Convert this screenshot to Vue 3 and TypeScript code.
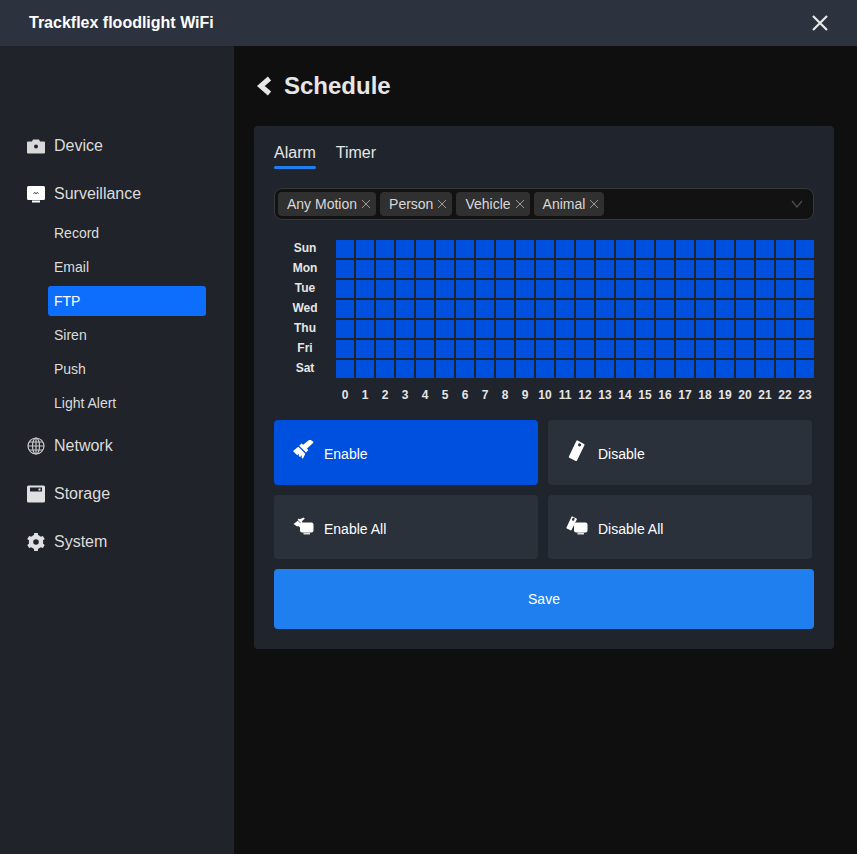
<template>
  <div class="dialog">
    <header class="top-bar">
      <span class="dialog-title">Trackflex floodlight WiFi</span>
      <svg class="close-icon" viewBox="0 0 18 18" width="18" height="18">
        <path d="M2 2L16 16M16 2L2 16" stroke="#e8e8e8" stroke-width="2.2" fill="none" />
      </svg>
    </header>
    <div class="body">
      <aside class="side-nav">
        <template v-for="item in navItems" :key="item.name">
          <div class="nav-item">
            <svg class="nav-icon" viewBox="0 0 18 18" width="18" height="18" v-html="item.icon"></svg>
            <span>{{ item.name }}</span>
          </div>
          <div v-if="item.children" class="sub-nav">
            <div
              v-for="sub in item.children"
              :key="sub"
              :class="['sub-item', sub === 'FTP' ? 'active' : '']"
            >
              {{ sub }}
            </div>
          </div>
        </template>
      </aside>
      <main class="content">
        <div class="page-head">
          <svg viewBox="0 0 18 20" width="18" height="20">
            <path d="M14.500 2.500L5.800 10l8.700 7.500" stroke="#e6e6e6" stroke-width="5" fill="none" />
          </svg>
          <h1>Schedule</h1>
        </div>
        <section class="card">
          <div class="tabs">
            <div class="tab active">Alarm</div>
            <div class="tab">Timer</div>
          </div>
          <div class="select-box">
            <div v-for="tag in tags" :key="tag" class="tag">
              <span>{{ tag }}</span>
              <svg viewBox="0 0 10 10" width="10" height="10">
                <path d="M1 1L9 9M9 1L1 9" stroke="#9a9a9a" stroke-width="1" fill="none" />
              </svg>
            </div>
            <svg class="arrow" viewBox="0 0 12 8" width="12" height="8">
              <path d="M1 1L6 7L11 1" stroke="#4c4f55" stroke-width="1.2" fill="none" />
            </svg>
          </div>
          <div class="schedule">
            <div v-for="day in days" :key="day" class="row">
              <div class="day-label">{{ day }}</div>
              <div v-for="h in hours" :key="h" class="cell"></div>
            </div>
            <div class="row hour-row">
              <div class="day-label"></div>
              <div v-for="h in hours" :key="h" class="hour">{{ h }}</div>
            </div>
          </div>
          <div class="actions">
            <button class="action primary">
              <svg viewBox="0 0 22 22" width="22" height="22">
                <path d="M21 1.500c.6.6.4 1.300-.2 1.800L15 8.600l1.300 1.600-2.300 2.300-6.800-6.800 2.300-2.200 1.600 1.300 5.700-4.600c.6-.5 1.400-.8 2-.2z" fill="#fff" />
                <path d="M6.300 6.800l7 7-2.400 5-1.400-1.200.6-2.600-2 2-1.400-1-.1-.1.7-2.200-1.900 1.500-1.500-1.200L1 11z" fill="#fff" />
              </svg>
              <span>Enable</span>
            </button>
            <button class="action">
              <svg viewBox="0 0 22 22" width="22" height="22">
                <path fill-rule="evenodd" d="M11.600.6l6.400 3.300c.5.300.7.800.4 1.300L11 20.600c-.3.500-.8.600-1.300.4L3.300 17.700c-.5-.3-.7-.8-.4-1.300L10.300 1c.3-.5.800-.6 1.300-.4zM12.200 4.100a1.500 1.500 0 1 0 2.700 1.400 1.500 1.500 0 1 0-2.700-1.400z" fill="#fff" />
              </svg>
              <span>Disable</span>
            </button>
            <button class="action">
              <svg viewBox="0 0 22 22" width="22" height="22">
                <path d="M11.500 2.500l1.300 1.200-3 2.500.8 1-1.300 1.300-3.700-3.700 1.300-1.200.9.7z" fill="#fff" />
                <path d="M5.800 5.700l3.900 3.900-1.200 3.100-1.800-1.100-.6-.8-.8.6-3.800-2.300z" fill="#fff" />
                <rect x="8" y="7.500" width="13.500" height="10" rx="2" fill="#fff" />
                <rect x="11.500" y="17.500" width="6.500" height="2" fill="#ddd" />
              </svg>
              <span>Enable All</span>
            </button>
            <button class="action">
              <svg viewBox="0 0 22 22" width="22" height="22">
                <path fill-rule="evenodd" d="M6.500 1.500l4 2c.4.2.5.6.3 1L5.500 15c-.2.4-.6.5-1 .3l-3.700-1.900c-.4-.2-.5-.6-.3-1l5-10.600c.2-.4.6-.5 1-.3zM6.400 3.800a1.100 1.100 0 1 0 1.800.9 1.100 1.100 0 1 0-1.800-.9z" fill="#fff" />
                <rect x="8" y="7.500" width="13.500" height="10" rx="2" fill="#fff" />
                <rect x="11.500" y="17.500" width="6.500" height="2" fill="#ddd" />
              </svg>
              <span>Disable All</span>
            </button>
          </div>
          <button class="save">Save</button>
        </section>
      </main>
    </div>
  </div>
</template>

<script setup lang="ts">
interface NavItem {
  name: string
  icon: string
  children?: string[]
}

const gearTeeth = [0, 60, 120, 180, 240, 300]
  .map((a) => `<path transform="rotate(${a} 9 9)" d="M7.200 0h3.600l.4 3H6.800z"/>`)
  .join('')

const navItems: NavItem[] = [
  {
    name: 'Device',
    icon: '<path fill="#d8d8d8" fill-rule="evenodd" d="M6 2.500h6l1 2h4a1 1 0 0 1 1 1v10a1 1 0 0 1-1 1H1a1 1 0 0 1-1-1v-10a1 1 0 0 1 1-1h4zM9 7.500a2 2 0 1 0 0 4 2 2 0 0 0 0-4z"/>',
  },
  {
    name: 'Surveillance',
    icon: '<path fill="#fff" d="M1.500 1h15A1.500 1.500 0 0 1 18 2.500v11a1.500 1.500 0 0 1-1.500 1.500h-15A1.500 1.500 0 0 1 0 13.500v-11A1.500 1.500 0 0 1 1.500 1z"/><rect x="5" y="15.500" width="8" height="2" fill="#fff"/><path d="M6.500 8.500l1.300-1 1.300 1.200 1.200-1.200 1.200 1" stroke="#20232a" fill="none"/>',
    children: ['Record', 'Email', 'FTP', 'Siren', 'Push', 'Light Alert'],
  },
  {
    name: 'Network',
    icon: '<g fill="none" stroke="#c8c8c8" stroke-width="1.200"><circle cx="9" cy="9" r="8"/><ellipse cx="9" cy="9" rx="3.500" ry="8"/><path d="M9 1v16M1 9h16M2 5h14M2 13h14"/></g>',
  },
  {
    name: 'Storage',
    icon: '<path fill="#e0e0e0" fill-rule="evenodd" d="M1.500.5h15A1.500 1.500 0 0 1 18 2v14a1.500 1.500 0 0 1-1.500 1.500h-15A1.500 1.500 0 0 1 0 16V2A1.500 1.500 0 0 1 1.500.5zM3 2.500v4h12v-4zM11.500 3.500H13.500v2H11.500z"/>',
  },
  {
    name: 'System',
    icon: `<g fill="#e0e0e0">${gearTeeth}</g><circle cx="9" cy="9" r="5" fill="none" stroke="#e0e0e0" stroke-width="4.400"/>`,
  },
]

const tags = ['Any Motion', 'Person', 'Vehicle', 'Animal']
const days = ['Sun', 'Mon', 'Tue', 'Wed', 'Thu', 'Fri', 'Sat']
const hours = Array.from({ length: 24 }, (_, i) => i)
</script>

<style scoped>
.dialog {
  width: 857px;
  height: 854px;
  display: flex;
  flex-direction: column;
  font-family: "Liberation Sans", Arial, sans-serif;
  color: #e6e6e6;
  background: #0f0f0f;
  overflow: hidden;
}

.top-bar {
  height: 46px;
  flex: none;
  display: flex;
  align-items: center;
  justify-content: space-between;
  padding: 0 28px 0 29px;
  background: #2c333e;
}

.dialog-title {
  font-size: 16px;
  font-weight: bold;
  color: #fff;
}

.body {
  flex: 1;
  display: flex;
  min-height: 0;
}

.side-nav {
  width: 234px;
  flex: none;
  box-sizing: border-box;
  padding: 76px 28px 0 27px;
  background: #20232a;
}

.nav-item {
  height: 48px;
  display: flex;
  align-items: center;
  gap: 9px;
  font-size: 16px;
  color: #dcdcdc;
}

.sub-nav {
  display: flex;
  flex-direction: column;
  gap: 4px;
  padding-bottom: 4px;
}

.sub-item {
  height: 30px;
  line-height: 30px;
  margin-left: 21px;
  padding-left: 6px;
  border-radius: 3px;
  font-size: 14px;
  color: #dcdcdc;
}

.sub-item.active {
  background: #0d6efd;
  color: #fff;
}

.content {
  flex: 1;
  min-width: 0;
  padding: 0 23px 0 20px;
}

.page-head {
  height: 80px;
  display: flex;
  align-items: center;
  gap: 11px;
  margin-left: 1px;
}

.page-head h1 {
  margin: 0;
  font-size: 24px;
  font-weight: bold;
  color: #e6e6e6;
}

.card {
  box-sizing: border-box;
  height: 523px;
  padding: 16px 20px 20px;
  background: #20242c;
  border-radius: 4px;
}

.tabs {
  display: flex;
  gap: 20px;
  height: 26px;
}

.tab {
  height: 26px;
  font-size: 16px;
  line-height: 22px;
  color: #e6e6e6;
  position: relative;
}

.tab.active::after {
  content: '';
  position: absolute;
  left: 0;
  right: 0;
  bottom: -1px;
  height: 3px;
  border-radius: 2px;
  background: #1f7fef;
}

.select-box {
  box-sizing: border-box;
  height: 32px;
  margin-top: 20px;
  display: flex;
  align-items: center;
  gap: 4px;
  padding: 0 3px;
  background: #121212;
  border: 1px solid #3a3a3a;
  border-radius: 8px;
  position: relative;
}

.tag {
  height: 24px;
  display: flex;
  align-items: center;
  gap: 4px;
  padding: 0 5px 0 9px;
  background: #303030;
  border-radius: 4px;
  font-size: 14px;
  color: #d8d8d8;
}

.arrow {
  position: absolute;
  right: 10px;
  top: 11px;
}

.schedule {
  margin-top: 20px;
  display: flex;
  flex-direction: column;
  gap: 2px;
}

.row {
  display: flex;
  gap: 2px;
  height: 18px;
}

.day-label {
  width: 60px;
  flex: none;
  box-sizing: border-box;
  padding-left: 2px;
  text-align: center;
  font-size: 12px;
  font-weight: bold;
  line-height: 16px;
  color: #e6e6e6;
}

.cell {
  width: 18px;
  height: 18px;
  background: #0050e0;
}

.hour-row {
  margin-top: 6px;
  height: 18px;
}

.hour {
  width: 18px;
  text-align: center;
  font-size: 12px;
  font-weight: bold;
  line-height: 18px;
  color: #e6e6e6;
}

.actions {
  margin-top: 16px;
  display: grid;
  grid-template-columns: 264px 264px;
  grid-template-rows: 65px 64px;
  gap: 10px;
}

.action {
  border: 0;
  border-radius: 4px;
  background: #2b313b;
  color: #fff;
  font: 14px "Liberation Sans", Arial, sans-serif;
  display: flex;
  align-items: center;
  gap: 10px;
  padding: 0 0 0 18px;
}

.action svg {
  margin-top: -3px;
}

.action span {
  margin-top: 3px;
}

.action.primary {
  background: #0050e0;
}

.save {
  display: block;
  width: 100%;
  height: 60px;
  margin-top: 10px;
  border: 0;
  border-radius: 4px;
  background: #1f7fef;
  color: #fff;
  font: 14px "Liberation Sans", Arial, sans-serif;
}
</style>

<style>
html,
body {
  margin: 0;
  background: #0f0f0f;
}
</style>
